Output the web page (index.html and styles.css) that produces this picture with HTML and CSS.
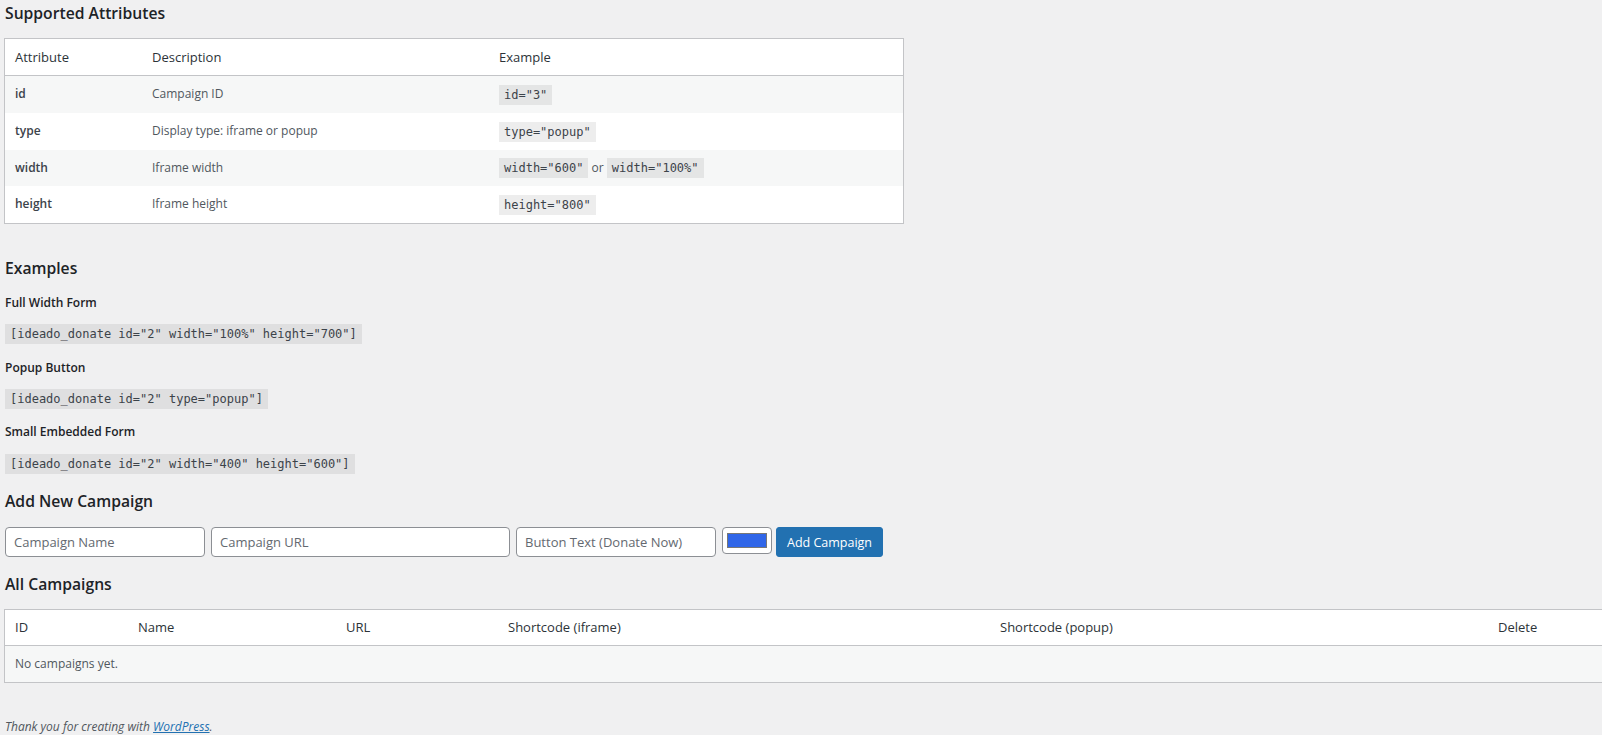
FILE: index.html
```
<!DOCTYPE html>
<html lang="en">
<head>
<meta charset="UTF-8">
<title>Ideado Donate</title>
<link rel="stylesheet" href="styles.css">
</head>
<body>
<div class="wrap">
	<h2 class="title top">Supported Attributes</h2>
	<table class="widefat attrs">
		<thead>
			<tr>
				<th class="col-attr">Attribute</th>
				<th class="col-desc">Description</th>
				<th>Example</th>
			</tr>
		</thead>
		<tbody>
			<tr class="alt">
				<td class="name">id</td>
				<td>Campaign ID</td>
				<td><code>id="3"</code></td>
			</tr>
			<tr>
				<td class="name">type</td>
				<td>Display type: iframe or popup</td>
				<td><code>type="popup"</code></td>
			</tr>
			<tr class="alt">
				<td class="name">width</td>
				<td>Iframe width</td>
				<td><code>width="600"</code> or <code>width="100%"</code></td>
			</tr>
			<tr>
				<td class="name">height</td>
				<td>Iframe height</td>
				<td><code>height="800"</code></td>
			</tr>
		</tbody>
	</table>

	<h2 class="title examples">Examples</h2>
	<h4 class="ex-title first">Full Width Form</h4>
	<p class="ex-code"><code>[ideado_donate id="2" width="100%" height="700"]</code></p>
	<h4 class="ex-title">Popup Button</h4>
	<p class="ex-code"><code>[ideado_donate id="2" type="popup"]</code></p>
	<h4 class="ex-title third">Small Embedded Form</h4>
	<p class="ex-code last"><code>[ideado_donate id="2" width="400" height="600"]</code></p>

	<h2 class="title add">Add New Campaign</h2>
	<form class="add-form" onsubmit="return false;">
		<input type="text" class="field name-field" placeholder="Campaign Name">
		<input type="text" class="field url-field" placeholder="Campaign URL">
		<input type="text" class="field name-field" placeholder="Button Text (Donate Now)">
		<input type="color" class="color-field" value="#3066e8">
		<button type="submit" class="button-primary">Add Campaign</button>
	</form>

	<h2 class="title list">All Campaigns</h2>
	<table class="widefat campaigns">
		<thead>
			<tr>
				<th class="c-id">ID</th>
				<th class="c-name">Name</th>
				<th class="c-url">URL</th>
				<th class="c-iframe">Shortcode (iframe)</th>
				<th class="c-popup">Shortcode (popup)</th>
				<th class="c-del">Delete</th>
			</tr>
		</thead>
		<tbody>
			<tr class="alt">
				<td colspan="6">No campaigns yet.</td>
			</tr>
		</tbody>
	</table>

	<p class="footer-text"><em>Thank you for creating with <a href="#">WordPress</a>.</em></p>
</div>
</body>
</html>
```

FILE: styles.css
```
html, body {
margin:0;
padding:0;
}
body {
background:#f0f0f1;
color:#3c434a;
font-family:"Open Sans", "Noto Sans", sans-serif;
font-size:12px;
line-height:1.5;
overflow-x:hidden;
}
.wrap {
padding:0 4px;
}
.title {
font-size:15.7px;
font-weight:600;
line-height:20px;
color:#1d2327;
margin:18px 1px 0;
}
.title.top {
margin-top:3px;
}
.title.examples {
margin-top:34px;
}
.title.add {
margin-top:17px;
}
.title.list {
margin-top:17px;
}

/* tables */
.widefat {
border:1px solid #c3c4c7;
border-spacing:0;
background:#fff;
margin-top:15px;
}
.widefat th {
text-align:left;
font-weight:400;
font-size:13px;
line-height:20px;
color:#2c3338;
padding:8px 10px;
border-bottom:1px solid #c3c4c7;
}
.widefat td {
padding:8px 10px;
line-height:20.5px;
color:#50575e;
vertical-align:middle;
}
.widefat tr.alt td {
background:#f6f7f7;
}
.attrs {
width:900px;
}
.attrs .col-attr {
width:117px;
}
.attrs .col-desc {
width:327px;
}
.attrs td.name {
font-weight:600;
color:#3c434a;
}
code {
font-family:"DejaVu Sans Mono", "Liberation Mono", monospace;
font-size:12px;
background:rgba(0,0,0,.07);
color:#3c434a;
padding:0 5px;
display:inline-block;
line-height:20px;
vertical-align:middle;
}

/* examples */
.ex-title {
font-size:12px;
font-weight:600;
line-height:18px;
color:#1d2327;
margin:15px 1px 0;
}
.ex-title.first {
margin-top:16px;
}
.ex-title.third {
margin-top:14px;
}
.ex-code {
margin:12px 1px 0;
line-height:20px;
height:20px;
}
.ex-code.last {
margin-top:13px;
}
.ex-code code {
vertical-align:top;
}

/* add form */
.add-form {
display:flex;
align-items:flex-start;
margin:16px 1px 0;
}
.field {
box-sizing:border-box;
height:30px;
border:1px solid #8c8f94;
border-radius:4px;
background:#fff;
padding:0 8px;
margin:0 6px 0 0;
font-family:"Open Sans", "Noto Sans", sans-serif;
font-size:13px;
color:#2c3338;
}
.field::placeholder {
color:#646970;
}
.name-field {
width:200px;
}
.url-field {
width:299px;
}
.color-field {
box-sizing:border-box;
width:50px;
height:27px;
padding:5px 4px;
margin:0 4px 0 0;
border:1px solid #8c8f94;
border-radius:4px;
background:#fff;
}
.color-field::-webkit-color-swatch-wrapper {
padding:0;
}
.color-field::-webkit-color-swatch {
border:1px solid #777;
border-radius:0;
}
.button-primary {
height:30px;
padding:0 10px;
border:1px solid #2271b1;
border-radius:3px;
background:#2271b1;
color:#fff;
font-family:"Open Sans", "Noto Sans", sans-serif;
font-size:12.5px;
}

/* campaigns */
.campaigns {
width:1637px;
}
.campaigns th {
line-height:19px;
}
.campaigns td {
line-height:19.5px;
}
.campaigns .c-id { width:103px; }
.campaigns .c-name { width:188px; }
.campaigns .c-url { width:142px; }
.campaigns .c-iframe { width:472px; }
.campaigns .c-popup { width:478px; }
.campaigns .c-del { width:132px; }

.footer-text {
margin:35px 1px 0;
line-height:18px;
color:#50575e;
}
.footer-text a {
color:#2271b1;
text-decoration:underline;
}
```
